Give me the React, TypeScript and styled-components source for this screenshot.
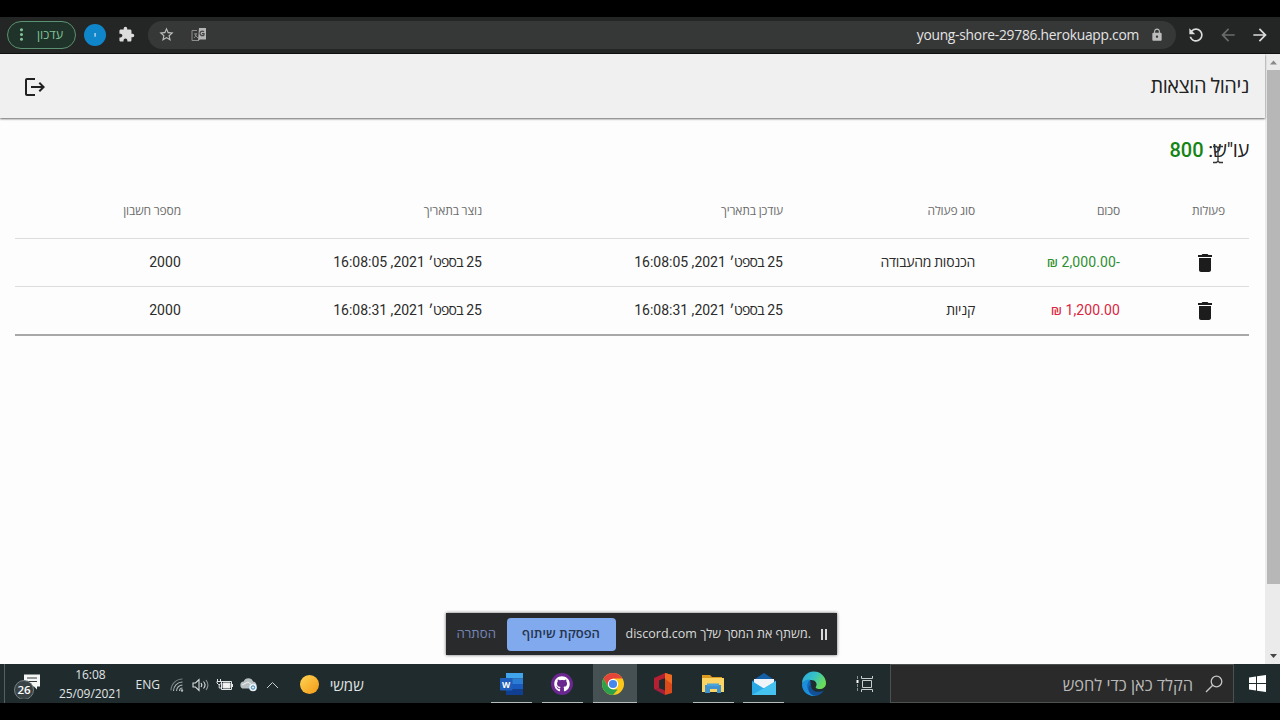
import React from 'react'
import styled, { createGlobalStyle } from 'styled-components'
import {
  MdArrowBack, MdArrowForward, MdDelete, MdExtension, MdLock, MdLogout, MdMoreVert, MdRefresh, MdStarBorder,
} from 'react-icons/md'
import { FaGithub } from 'react-icons/fa'

const GlobalStyle = createGlobalStyle`
  * {
    box-sizing: border-box;
  }

  body {
    margin: 0;
    background: #000;
    font-family: Roboto, 'Open Sans', 'Liberation Sans', sans-serif;
  }
`

const Screen = styled.div`
  display: flex;
  flex-direction: column;
  width: 1280px;
  height: 720px;
  padding: 17px 0;
  overflow: hidden;
  background: #000;
`

/* ---------- browser toolbar ---------- */

const BrowserBar = styled.div`
  display: flex;
  align-items: center;
  flex: none;
  height: 37px;
  padding: 0 11px 1px 7px;
  background: #242525;
  border-bottom: 1px solid #111;
  color: #dcdcdc;
`

const UpdateButton = styled.div`
  display: flex;
  align-items: center;
  justify-content: space-between;
  width: 69px;
  height: 28px;
  padding: 0 12px 1px 4px;
  border: 1px solid #5a9170;
  border-radius: 14px;
  background: #20332a;
  color: #7fc195;
  font: 12.5px 'Open Sans', sans-serif;
`

const Avatar = styled.div`
  display: flex;
  align-items: center;
  justify-content: center;
  width: 22px;
  height: 22px;
  margin: 0 12px 0 8px;
  border-radius: 50%;
  background: #0f86c9;
  color: #fff;
  font: 10px 'Open Sans', sans-serif;
`

const AddressBar = styled.div`
  display: flex;
  align-items: center;
  flex: 1;
  height: 28px;
  margin-left: 13px;
  padding: 0 12px 0 10px;
  border-radius: 14px;
  background: #363737;
  color: #bdbdbd;
`

const TranslateButton = styled.div`
  display: flex;
  margin-left: 16px;
`

const Url = styled.span`
  margin: 0 11px 0 auto;
  color: #e4e4e4;
  font: 13.8px/20px 'Open Sans', sans-serif;
  letter-spacing: -0.25px;
`

const NavButtons = styled.div`
  display: flex;
  align-items: center;
  gap: 12px;
  margin: 0 -1px 0 10px;
`

const ReloadIcon = styled(MdRefresh)`
  transform: scaleX(-1);
`

const DimBackIcon = styled(MdArrowBack)`
  color: #6b6b6b;
`

/* ---------- page ---------- */

const Viewport = styled.div`
  display: flex;
  flex: 1;
  min-height: 0;
  background: #fdfdfd;
`

const Page = styled.main`
  position: relative;
  flex: 1;
  direction: rtl;
  color: #212121;
`

const AppBar = styled.header`
  display: flex;
  align-items: center;
  justify-content: space-between;
  height: 64px;
  padding: 0 16px 0 24px;
  background: #f0f0f0;
  box-shadow: 0 1px 2px rgba(0, 0, 0, 0.6);

  svg {
    display: block;
    margin: 1px 0 0 -1px;
  }
`

const Title = styled.h1`
  margin: 0;
  font-size: 20px;
  font-weight: 400;
  letter-spacing: -0.45px;
  line-height: 32px;
`

const Balance = styled.h2`
  margin: 16px 16px 0 0;
  font-size: 20px;
  font-weight: 400;
  letter-spacing: -0.3px;
  line-height: 32px;
`

const BalanceValue = styled.span`
  color: #148514;
  font-weight: 500;
  letter-spacing: 0;
`

const Table = styled.div`
  margin: 16px 16px 0 15px;
  border-bottom: 2px solid #a8a8a8;
`

const Cell = styled.div<{ $color?: string; $spacing?: number }>`
  padding-bottom: 2px;
  color: ${({ $color }) => $color || 'inherit'};
  letter-spacing: ${({ $spacing = 0.1 }) => $spacing}px;
  white-space: nowrap;

  &:first-child {
    padding-right: 24px;
  }
`

const Row = styled.div`
  display: grid;
  grid-template-columns: 129px 145px 192px 301px 301px 1fr;
  align-items: center;
  height: 48px;
  border-top: 1px solid #dcdcdc;
  color: #2b2b2b;
  font-size: 14px;
`

const HeadRow = styled(Row)`
  height: 56px;
  border-top: 0;
  color: #6c6c6c;
  font-size: 12px;

  ${Cell} {
    padding-bottom: 0;
    letter-spacing: -0.13px;
  }
`

const Month = styled.span`
  letter-spacing: -0.75px;
`

const DeleteButton = styled.div`
  display: flex;
  padding: 2px 8px 0 0;
  color: #1c1c1c;
`

const TextCursor = styled.svg`
  position: absolute;
  top: 91px;
  left: 1212px;
`

const Scrollbar = styled.div`
  display: flex;
  flex-direction: column;
  align-items: flex-end;
  width: 15px;
  background: #ebebeb;
`

const Thumb = styled.div`
  width: 13px;
  height: 514px;
  background: #b7b7b7;
`

const ScrollArrow = styled.svg`
  width: 14px;
  height: 16px;

  &:last-child {
    margin-top: auto;
  }
`

/* ---------- screen sharing bar ---------- */

const ShareBar = styled.div`
  position: absolute;
  top: 559px;
  left: 445.5px;
  display: flex;
  align-items: center;
  width: 391px;
  height: 42px;
  padding: 0 10px 0 11px;
  background: #292a2b;
  box-shadow: 0 0 3px rgba(0, 0, 0, 0.6);
  color: #dadada;
  direction: ltr;
  font: 12.5px 'Open Sans', sans-serif;
  white-space: nowrap;
`

const HideLink = styled.span`
  width: 50px;
  padding-bottom: 2px;
  color: #7686b8;
  font-size: 13.2px;
`

const StopButton = styled.div`
  width: 109px;
  height: 33px;
  margin-right: 10px;
  border-radius: 4px;
  background: #80a9ee;
  color: #27354f;
  font-size: 13px;
  font-weight: 600;
  line-height: 31px;
  text-align: center;
`

const ShareText = styled.span`
  padding-bottom: 2px;
`

const PauseMark = styled.i`
  width: 6px;
  height: 11px;
  margin: 0 0 0 auto;
  border: solid #d8d8d8;
  border-width: 0 2px;
`

/* ---------- taskbar ---------- */

const Taskbar = styled.footer`
  display: flex;
  flex: none;
  height: 39px;
  background: #1f2b2d;
  color: #e0e4e4;
  font: 12px 'Open Sans', sans-serif;
`

const DesktopEdge = styled.div`
  width: 5px;
  border-right: 1px solid #566063;
`

const TraySlot = styled.div<{ $width: number }>`
  display: flex;
  align-items: center;
  justify-content: center;
  width: ${({ $width }) => $width}px;
  padding-top: 2px;
`

const Clock = styled.div`
  width: 81px;
  padding-top: 1px;
  letter-spacing: -0.1px;
  line-height: 19px;
  text-align: center;
`

const Weather = styled.div`
  display: flex;
  align-items: center;
  gap: 11px;
  width: 202px;
  padding: 2px 0 0 15px;
  font-size: 15px;
`

const Sun = styled.i`
  width: 19px;
  height: 19px;
  border-radius: 50%;
  background: linear-gradient(135deg, #ffd454, #f39a16);
`

const AppSlot = styled.div<{ $active?: boolean; $running?: boolean }>`
  display: flex;
  align-items: center;
  justify-content: center;
  width: ${({ $active }) => ($active ? 44 : 41)}px;
  margin: 0 ${({ $active }) => ($active ? '0.5px 0 5.5px' : '4.5px 0 5px')};
  padding: 2px ${({ $active }) => ($active ? 4 : 0)}px 0 0;
  background: ${({ $active }) => ($active ? '#465153' : 'transparent')};
  border-bottom: 1px solid ${({ $running }) => ($running ? '#b4bcbd' : 'transparent')};

  svg {
    flex: none;
  }
`

const SearchBox = styled.div`
  display: flex;
  align-items: center;
  justify-content: flex-end;
  gap: 12px;
  width: 345px;
  margin-left: auto;
  padding: 1px 10px 0 0;
  border: 1px solid #4b5151;
  background: #2a2a2a;
  color: #b9b9b9;
  font-size: 16.4px;
`

const StartButton = styled.div`
  display: flex;
  align-items: center;
  justify-content: center;
  width: 46px;
  padding-left: 1px;
`

const columns = ['פעולות', 'סכום', 'סוג פעולה', 'עודכן בתאריך', 'נוצר בתאריך', 'מספר חשבון']

const actions = [
  { amount: '-2,000.00 ₪', color: '#2f8f33', kind: 'הכנסות מהעבודה', time: '16:08:05', account: '2000' },
  { amount: '1,200.00 ₪', color: '#dc2440', kind: 'קניות', time: '16:08:31', account: '2000' },
]

const DateCell = ({ time }: { time: string }) => (
  <Cell $spacing={0}>
    25 <Month>בספט׳</Month> 2021, {time}
  </Cell>
)

const TranslateIcon = () => (
  <svg width="16" height="16" viewBox="0 0 16 16" fill="none">
    <path d="M6 3.500H1v10h6.500" stroke="#8d8d8d" />
    <path d="M3 7h3M5 6v1c0 2-1 3-2 4M4 8l3 3" stroke="#8d8d8d" />
    <path d="M8 1h7v11.500H9L7 14z" fill="#b5b5b5" />
    <path d="M13 4.800a2.300 2.300 0 1 0 0 3.200V6.700h-2" stroke="#454545" strokeWidth="1.200" />
  </svg>
)

const NotificationsIcon = () => (
  <svg width="28" height="28" viewBox="0 0 28 28">
    <path d="M11 3.500h16v12h-3v3l-3-3H11z" fill="#f4f5f5" />
    <path d="M14 7h10M14 10.500h10" stroke="#2f3b3d" />
    <circle cx="11" cy="19" r="9.500" fill="#394345" stroke="#788183" />
    <text x="11" y="23.300" fill="#fff" fontSize="11.500" fontWeight="600" textAnchor="middle">26</text>
  </svg>
)

const WifiIcon = () => (
  <svg width="16" height="16" viewBox="0 0 16 16" fill="none" stroke="#aeb5b6" strokeWidth="1.100">
    <path d="M2 13.500A11.500 11.500 0 0 1 13.500 2" opacity=".6" />
    <path d="M4.500 14A9 9 0 0 1 13.500 5" />
    <path d="M7.500 14A6 6 0 0 1 13.500 8" />
    <path d="M10.500 14a3 3 0 0 1 3-3" />
    <circle cx="13" cy="13.500" r=".7" fill="#fff" />
  </svg>
)

const SpeakerIcon = () => (
  <svg width="17" height="14" viewBox="0 0 17 14" fill="none" stroke="#d7dbdb" strokeWidth="1.100">
    <path d="M1 5h2.500L7 1.500v11L3.500 9H1z" />
    <path d="M9 5c1 1.200 1 2.800 0 4M11.500 3.500c1.800 2 1.800 5 0 7" />
    <path d="M14 2c2.300 3 2.300 7 0 10" opacity=".6" />
  </svg>
)

const BatteryIcon = () => (
  <svg width="18" height="14" viewBox="0 0 18 14" fill="none" stroke="#e3e6e6">
    <path d="M5.500 3.500h10v8h-10z" />
    <path d="M7 5h7v5H7z" fill="#f2f2f2" />
    <path d="M16.500 6v3M1.500 1v2M4.500 1v2M1 3.500h4.500v1.500L4 6.500H2.500L1 5zM3.200 6.500v3.500h2" />
  </svg>
)

const CloudIcon = () => (
  <svg width="18" height="15" viewBox="0 0 18 15">
    <path d="M4 11.500a3.500 3.500 0 0 1-.3-7A5 5 0 0 1 13 4.500a3.600 3.600 0 0 1 1 7z" fill="#b9c0c2" />
    <path d="M2 8l6-3 7 5" stroke="#eef0f0" fill="none" />
    <circle cx="13" cy="10.500" r="3.800" fill="#e8f1f7" />
    <circle cx="13" cy="10.500" r="1.700" fill="none" stroke="#3584b8" />
  </svg>
)

const CaretIcon = () => (
  <svg width="13" height="8" viewBox="0 0 12 8" fill="none" stroke="#c8cccc">
    <path d="M.5 7 6 1.500 11.500 7" />
  </svg>
)

const WordIcon = () => (
  <svg width="24" height="22" viewBox="0 0 24 22">
    <path d="M6 0h17v5.500H6z" fill="#41a5ee" />
    <path d="M6 5.500h17V11H6z" fill="#2b7cd3" />
    <path d="M6 11h17v5.500H6z" fill="#185abd" />
    <path d="M6 16.500h17V22H6z" fill="#103f91" />
    <rect y="5" width="12.500" height="12.500" rx="1" fill="#1f5dbb" />
    <text x="6.200" y="14.500" fill="#fff" fontSize="8.500" fontWeight="700" textAnchor="middle">W</text>
  </svg>
)

const GithubIcon = () => (
  <svg width="22" height="22" viewBox="0 0 22 22">
    <circle cx="11" cy="11" r="11" fill="#6a2790" />
    <FaGithub x="3" y="3" size={16} color="#fff" />
  </svg>
)

const ChromeIcon = () => (
  <svg width="24" height="24" viewBox="0 0 24 24">
    <circle cx="12" cy="12" r="11" fill="#fbc719" />
    <path d="M2.500 6.500A11 11 0 0 1 21.500 6.500H12L7.200 14.800z" fill="#e5443a" />
    <path d="M2.500 6.500 7.200 14.800 12 17.500h4.800L12 23A11 11 0 0 1 2.500 6.500z" fill="#2ba14e" />
    <circle cx="12" cy="12" r="5.200" fill="#fff" />
    <circle cx="12" cy="12" r="4.100" fill="#4687ee" />
  </svg>
)

const OfficeIcon = () => (
  <svg width="20" height="24" viewBox="0 0 20 24">
    <path d="M1 6 12 1v5L6 8.500V16l-3.500 2L1 16.500z" fill="#b41f32" />
    <path d="M12 1l7 2v18l-7 2z" fill="#dc4a1c" />
    <path d="M12 1l7 2v9l-7-5z" fill="#f06b22" />
    <path d="M2.500 18 6 16l6 2.500V23z" fill="#a61f3a" />
  </svg>
)

const ExplorerIcon = () => (
  <svg width="24" height="20" viewBox="0 0 24 20">
    <path d="M1 1h8l2 2h10v4H1z" fill="#dc9c22" />
    <path d="M1 4h22v14H1z" fill="#fbd464" />
    <path d="M4 11h16v8h-4v-4H9v4H4z" fill="#3f93cf" />
    <path d="M6 9.500h12V12H6z" fill="#4ba3dc" />
  </svg>
)

const MailIcon = () => (
  <svg width="26" height="24" viewBox="0 0 26 24">
    <path d="M1 9 13 1l12 8v5H1z" fill="#1360a8" />
    <path d="M3 7h20v9H3z" fill="#f0f4f8" />
    <path d="M1 9l12 7.500L25 9v14H1z" fill="#29a8e6" />
    <path d="M1 23 25 9v14z" fill="#46c2f0" />
  </svg>
)

const EdgeIcon = () => (
  <svg width="26" height="26" viewBox="0 0 26 26">
    <defs>
      <linearGradient id="edgeTop" x1="0" y1="0" x2="1" y2=".5">
        <stop offset="0" stopColor="#2aa6e0" />
        <stop offset=".5" stopColor="#35c1c8" />
        <stop offset="1" stopColor="#6bdc58" />
      </linearGradient>
    </defs>
    <path d="M1 13a12 12 0 0 0 20 8.800c-7 2.500-11-1.500-11-6L9 8z" fill="#1268bd" />
    <path d="M1 13A12 12 0 0 1 25 12c0 4-3 6-6.500 6-3 0-4.500-1.200-3.500-2.500 2-3-1-7-5.500-6.500C5 9.300 1.500 11 1 13z" fill="url(#edgeTop)" />
    <path d="M1 13c1-3.500 5-5 8.500-4.500C6 11 5 16 8 20.500c2 2.800 4 4 6.500 4.400C7 26 1 20 1 13z" fill="#1c8fda" />
    <path d="M10.500 12c-2 4 1.500 10.500 9.500 8.500 1-.3 2.300-.8 3-1.300-2 4-7 6-11 5-5-2-6-9-1.500-12.200z" fill="#124f96" />
  </svg>
)

const TaskViewIcon = () => (
  <svg width="18" height="18" viewBox="0 0 18 18" fill="none" stroke="#c8cdcd">
    <path d="M1.500 1v16" opacity=".65" strokeDasharray="3 1" />
    <path d="M1.500 5v3" stroke="#fff" strokeWidth="2" />
    <path d="M6.500 5.500h9v7h-9zM5.500 1v2.500h11V1M5.500 17v-2.500h11V17" />
  </svg>
)

const SearchIcon = () => (
  <svg width="18" height="18" viewBox="0 0 18 18" fill="none" stroke="#c6c6c6" strokeWidth="1.300">
    <circle cx="11.500" cy="6.500" r="5.300" />
    <path d="M7.700 10.300 1 17" />
  </svg>
)

const WindowsIcon = () => (
  <svg width="17" height="17" viewBox="0 0 17 17" fill="#fff">
    <path d="M0 2.500 7 1.500V8H0zM8 1.300 17 0v8H8zM0 9h7v6.500L0 14.500zM8 9h9v8l-9-1.300z" />
  </svg>
)

const App = () => (
  <Screen>
    <GlobalStyle />
    <BrowserBar>
      <UpdateButton>
        <MdMoreVert size={19} />
        עדכון
      </UpdateButton>
      <Avatar>י</Avatar>
      <MdExtension size={17} />
      <AddressBar>
        <MdStarBorder size={17} />
        <TranslateButton><TranslateIcon /></TranslateButton>
        <Url>young-shore-29786.herokuapp.com</Url>
        <MdLock size={14} />
      </AddressBar>
      <NavButtons>
        <ReloadIcon size={20} />
        <DimBackIcon size={20} />
        <MdArrowForward size={20} />
      </NavButtons>
    </BrowserBar>

    <Viewport>
      <Page>
        <AppBar>
          <Title>ניהול הוצאות</Title>
          <MdLogout size={24} />
        </AppBar>
        <Balance>
          עו"ש: <BalanceValue>800</BalanceValue>
        </Balance>

        <Table>
          <HeadRow>
            {columns.map((name) => <Cell key={name}>{name}</Cell>)}
          </HeadRow>
          {actions.map((action) => (
            <Row key={action.time}>
              <Cell>
                <DeleteButton><MdDelete size={24} /></DeleteButton>
              </Cell>
              <Cell $color={action.color}>{action.amount}</Cell>
              <Cell $spacing={-0.28}>{action.kind}</Cell>
              <DateCell time={action.time} />
              <DateCell time={action.time} />
              <Cell>{action.account}</Cell>
            </Row>
          ))}
        </Table>

        <TextCursor width="12" height="19" viewBox="0 0 12 19" fill="none" stroke="#333" strokeWidth="1.300">
          <path d="M1 1.500h3.500L6 3l1.500-1.500H11M6 3v13M1 17.500h3.500L6 16l1.500 1.500H11" />
        </TextCursor>

        <ShareBar>
          <HideLink>הסתרה</HideLink>
          <StopButton>הפסקת שיתוף</StopButton>
          <ShareText>discord.com משתף את המסך שלך.</ShareText>
          <PauseMark />
        </ShareBar>
      </Page>

      <Scrollbar>
        <ScrollArrow viewBox="0 0 14 16"><path d="M4 10.500l3.500-4 3.500 4z" fill="#8a8a8a" /></ScrollArrow>
        <Thumb />
        <ScrollArrow viewBox="0 0 14 16"><path d="M4 6l3.500 4L11 6z" fill="#454545" /></ScrollArrow>
      </Scrollbar>
    </Viewport>

    <Taskbar>
      <DesktopEdge />
      <TraySlot $width={45}><NotificationsIcon /></TraySlot>
      <Clock>
        16:08
        <br />
        25/09/2021
      </Clock>
      <TraySlot $width={34}>ENG</TraySlot>
      <TraySlot $width={24}><WifiIcon /></TraySlot>
      <TraySlot $width={24}><SpeakerIcon /></TraySlot>
      <TraySlot $width={24}><BatteryIcon /></TraySlot>
      <TraySlot $width={24}><CloudIcon /></TraySlot>
      <TraySlot $width={24}><CaretIcon /></TraySlot>
      <Weather><Sun />שמשי</Weather>
      <AppSlot $running><WordIcon /></AppSlot>
      <AppSlot $running><GithubIcon /></AppSlot>
      <AppSlot $active $running><ChromeIcon /></AppSlot>
      <AppSlot><OfficeIcon /></AppSlot>
      <AppSlot $running><ExplorerIcon /></AppSlot>
      <AppSlot $running><MailIcon /></AppSlot>
      <AppSlot><EdgeIcon /></AppSlot>
      <AppSlot><TaskViewIcon /></AppSlot>
      <SearchBox>
        <span dir="rtl">הקלד כאן כדי לחפש</span>
        <SearchIcon />
      </SearchBox>
      <StartButton><WindowsIcon /></StartButton>
    </Taskbar>
  </Screen>
)

export default App
